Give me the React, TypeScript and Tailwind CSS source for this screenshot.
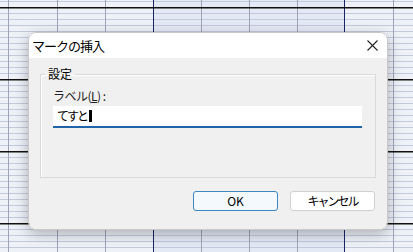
const ROWS = Array.from({ length: 43 }, (_, i) => 1 + i * 6);
const COLS = [8, 57, 105, 153, 201, 249, 297, 344, 393];
const DARK_ROWS = [7, 79, 151, 223];
const DARK_COLS = [153, 344];

function SheetGrid() {
  return (
    <svg className="absolute inset-0" width={413} height={252} viewBox="0 0 413 252">
      <rect width={413} height={252} fill="#eef1f8" />
      <rect x={153} width={191} height={252} fill="#e4e9f6" />
      {ROWS.map((y) => (
        <rect key={y} x={0} y={y} width={413} height={1} fill="#c3cadc" />
      ))}
      {COLS.map((x) => (
        <rect key={x} x={x} y={0} width={1} height={252} fill={DARK_COLS.includes(x) ? "#1b2566" : "#9ea4b4"} />
      ))}
      {DARK_ROWS.map((y) => (
        <rect key={y} x={0} y={y} width={413} height={1.5} fill="#111" />
      ))}
    </svg>
  );
}

export default function App() {
  return (
    <div
      className="relative w-[413px] h-[252px] overflow-hidden text-[12px] text-black"
      style={{ fontFamily: '"Noto Sans CJK JP", "Noto Sans", sans-serif' }}
    >
      <SheetGrid />

      <div className="absolute left-[28px] top-[32px] w-[360px] h-[198px] flex flex-col rounded-[8px] overflow-hidden border border-[#c9c9c9] shadow-[0_4px_14px_rgba(0,0,0,0.28)]">
        <div className="h-[25px] bg-white flex items-center justify-between pl-[3px] pr-[9px]">
          <span className="text-[13px] leading-none tracking-[-1px]">マークの挿入</span>
          <svg width="11" height="11" viewBox="0 0 11 11" stroke="#222" strokeWidth="1.1">
            <path d="M0.5 0.5 L10.5 10.5 M10.5 0.5 L0.5 10.5" />
          </svg>
        </div>

        <div className="flex-1 bg-[#f0f0f0] pt-[8px] px-[11px] flex flex-col">
          <fieldset className="border border-[#d9d9d9] shadow-[inset_1px_1px_0_#fff] h-[112px] pl-[12px] pr-[13px]">
            <legend className="ml-[-8px] px-[3px] leading-[16px]">設定</legend>
            <div className="pt-[6px] leading-[16px] text-[#222] tracking-[-0.5px]">
              ラベル(<u>L</u>) :
            </div>
            <div className="mt-[2px] h-[22px] bg-white border-b-2 border-[#1f63a8] flex items-center pl-[4px] text-[12px] tracking-[-2px]">
              てすと<span className="inline-block ml-[2px] w-[3px] h-[12px] bg-black" />
            </div>
          </fieldset>

          <div className="flex justify-end gap-[12px] mt-[13px] pr-[1px]">
            <button className="w-[85px] h-[20px] rounded-[3px] border border-[#3d86bf] bg-[#f3f9fd] text-[12px] leading-none">
              OK
            </button>
            <button className="w-[85px] h-[20px] rounded-[3px] border border-[#d0d0d0] bg-white text-[12px] leading-none tracking-[-2px]">
              キャンセル
            </button>
          </div>
        </div>
      </div>
    </div>
  );
}
